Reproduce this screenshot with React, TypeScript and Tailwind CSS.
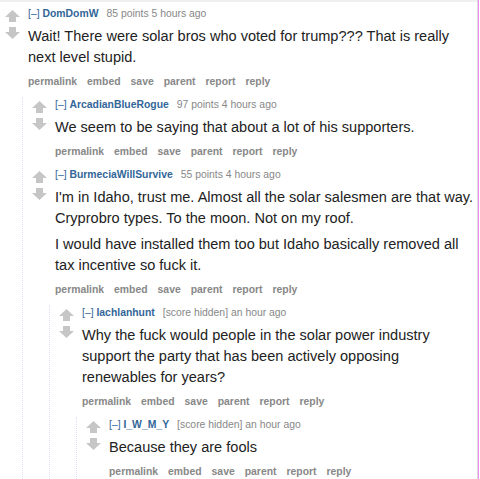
import React from "react";

type Comment = {
  author: string;
  score: string;
  time: string;
  body: string[];
  replies?: Comment[];
};

const thread: Comment = {
  author: "DomDomW",
  score: "85 points",
  time: "5 hours ago",
  body: ["Wait! There were solar bros who voted for trump??? That is really next level stupid."],
  replies: [
    {
      author: "ArcadianBlueRogue",
      score: "97 points",
      time: "4 hours ago",
      body: ["We seem to be saying that about a lot of his supporters."],
    },
    {
      author: "BurmeciaWillSurvive",
      score: "55 points",
      time: "4 hours ago",
      body: [
        "I'm in Idaho, trust me. Almost all the solar salesmen are that way. Cryprobro types. To the moon. Not on my roof.",
        "I would have installed them too but Idaho basically removed all tax incentive so fuck it.",
      ],
      replies: [
        {
          author: "lachlanhunt",
          score: "[score hidden]",
          time: "an hour ago",
          body: ["Why the fuck would people in the solar power industry support the party that has been actively opposing renewables for years?"],
          replies: [
            {
              author: "I_W_M_Y",
              score: "[score hidden]",
              time: "an hour ago",
              body: ["Because they are fools"],
            },
          ],
        },
      ],
    },
  ],
};

const Arrow = ({ down }: { down?: boolean }) => (
  <svg width="15" height="12" viewBox="0 0 15 12" className={down ? "rotate-180" : ""}>
    <polygon points="7.5,0 15,7 11,7 11,12 4,12 4,7 0,7" fill="#c6c6c6" />
  </svg>
);

const CommentItem = ({ c }: { c: Comment }) => {
  return (
    <div>
      <div className="flex flex-row pl-[5px] pb-[7.5px]">
        <div className="flex flex-col w-[15px] shrink-0 mt-[4px] gap-[5px]">
          <Arrow />
          <Arrow down />
        </div>
        <div className="ml-[8px] flex-1 min-w-0">
          <p className="text-[10.4px] leading-4">
            <span className="text-[#369]">[–] </span>
            <span className="text-[#369] font-bold mr-[8px]">{c.author}</span>
            <span className="text-[#888]">
              {c.score} {c.time}
            </span>
          </p>
          <div className="mt-[4px] flex flex-col gap-[5px] text-[14.55px] leading-[21px] text-[#222]">
            {c.body.map((b, i) => (
              <p key={i}>{b}</p>
            ))}
          </div>
          <div className="mt-[5.5px] flex flex-row gap-[10px] text-[10.4px] leading-4 font-bold text-[#888]">
            <p>permalink</p>
            <p>embed</p>
            <p>save</p>
            <p>parent</p>
            <p>report</p>
            <p>reply</p>
          </div>
        </div>
      </div>
      {c.replies && (
        <div className="ml-[22px] border-l border-dotted border-[#dde] pl-[4px]">
          {c.replies.map((r, i) => (
            <CommentItem key={i} c={r} />
          ))}
        </div>
      )}
    </div>
  );
};

export default function App() {
  return (
    <div
      className="w-[480px] h-[479px] overflow-hidden bg-white"
      style={{ fontFamily: '"Liberation Sans", Arial, sans-serif' }}
    >
      <div className="w-[479px] h-full border-r border-[#f08cf0]">
        <div className="h-full border-r border-[#dcdcdc]">
          <div className="h-[2px] bg-[#f0f0f0]"></div>
          <div className="pt-[4px] pr-[3px]">
            <CommentItem c={thread} />
          </div>
        </div>
      </div>
    </div>
  );
}
